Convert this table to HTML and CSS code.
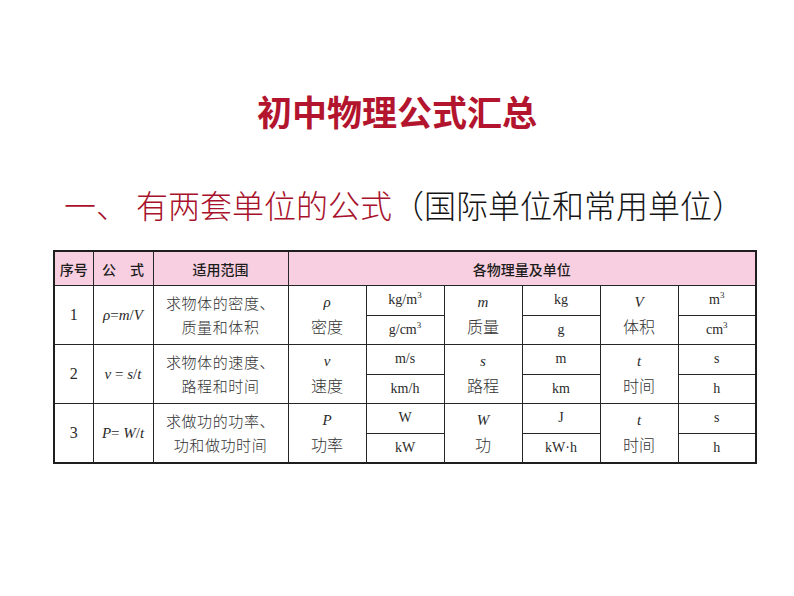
FILE: index.html
```html
<!DOCTYPE html>
<html lang="zh">
<head>
<meta charset="utf-8">
<title>初中物理公式汇总</title>
<link rel="stylesheet" href="styles.css">
</head>
<body>
<div class="page">
  <h1 class="title">初中物理公式汇总</h1>
  <h2 class="subtitle"><span class="red">一、</span><span class="red gap">有两套单位的公式</span><span class="black">（国际单位和常用单位）</span></h2>
  <table class="formulas">
    <colgroup>
      <col class="c1"><col class="c2"><col class="c3">
      <col class="cq"><col class="cq"><col class="cq"><col class="cq"><col class="cq"><col class="cq">
    </colgroup>
    <thead>
      <tr class="head">
        <th>序号</th>
        <th>公&emsp;式</th>
        <th>适用范围</th>
        <th colspan="6">各物理量及单位</th>
      </tr>
    </thead>
    <tbody>
      <tr class="r-a">
        <td rowspan="2" class="num">1</td>
        <td rowspan="2" class="fm"><i>ρ</i>=<i>m</i>/<i>V</i></td>
        <td rowspan="2" class="scope">求物体的密度、<br>质量和体积</td>
        <td rowspan="2" class="qty"><i>ρ</i><br><span class="cn">密度</span></td>
        <td class="unit">kg/m<sup>3</sup></td>
        <td rowspan="2" class="qty"><i>m</i><br><span class="cn">质量</span></td>
        <td class="unit">kg</td>
        <td rowspan="2" class="qty"><i>V</i><br><span class="cn">体积</span></td>
        <td class="unit">m<sup>3</sup></td>
      </tr>
      <tr class="r-b">
        <td class="unit">g/cm<sup>3</sup></td>
        <td class="unit">g</td>
        <td class="unit">cm<sup>3</sup></td>
      </tr>
      <tr class="r-a r2">
        <td rowspan="2" class="num">2</td>
        <td rowspan="2" class="fm"><i>v</i> = <i>s</i>/<i>t</i></td>
        <td rowspan="2" class="scope">求物体的速度、<br>路程和时间</td>
        <td rowspan="2" class="qty"><i>v</i><br><span class="cn">速度</span></td>
        <td class="unit">m/s</td>
        <td rowspan="2" class="qty"><i>s</i><br><span class="cn">路程</span></td>
        <td class="unit">m</td>
        <td rowspan="2" class="qty"><i>t</i><br><span class="cn">时间</span></td>
        <td class="unit">s</td>
      </tr>
      <tr class="r-b">
        <td class="unit">km/h</td>
        <td class="unit">km</td>
        <td class="unit">h</td>
      </tr>
      <tr class="r-a">
        <td rowspan="2" class="num">3</td>
        <td rowspan="2" class="fm"><i>P</i>= <i>W</i>/<i>t</i></td>
        <td rowspan="2" class="scope">求做功的功率、<br>功和做功时间</td>
        <td rowspan="2" class="qty"><i>P</i><br><span class="cn">功率</span></td>
        <td class="unit">W</td>
        <td rowspan="2" class="qty"><i>W</i><br><span class="cn">功</span></td>
        <td class="unit">J</td>
        <td rowspan="2" class="qty"><i>t</i><br><span class="cn">时间</span></td>
        <td class="unit">s</td>
      </tr>
      <tr class="r-b">
        <td class="unit">kW</td>
        <td class="unit">kW·h</td>
        <td class="unit">h</td>
      </tr>
    </tbody>
  </table>
</div>
</body>
</html>
```

FILE: styles.css
```css
html, body {
  margin: 0;
  padding: 0;
  background: #ffffff;
}

.page {
  width: 794px;
  height: 596px;
  display: flex;
  flex-direction: column;
  font-family: "Noto Sans CJK SC", "Noto Sans", sans-serif;
}

.title {
  margin: 93px 0 0 0;
  font-size: 35px;
  line-height: 36px;
  font-weight: 700;
  color: #b3142e;
  text-align: center;
  letter-spacing: 0;
}

.subtitle {
  margin: 58px 0 0 64px;
  font-size: 32px;
  line-height: 34px;
  font-weight: 300;
  white-space: nowrap;
}

.red { color: #a8112b; }
.black { color: #151515; }
.gap { margin-left: 8px; }

.formulas {
  margin: 29px 0 0 53px;
  border-collapse: collapse;
  table-layout: fixed;
  width: 702px;
  border: 2px solid #1e1e1e;
  font-family: "Liberation Serif", "Noto Sans CJK SC", serif;
  color: #2a2a2a;
}

.c1 { width: 39px; }
.c2 { width: 60px; }
.c3 { width: 135px; }
.cq { width: 78px; }

.formulas th,
.formulas td {
  border: 1.5px solid #262626;
  padding: 0;
  text-align: center;
  vertical-align: middle;
}

.head th {
  height: 33px;
  background: #f8cfe0;
  font-family: "Noto Sans CJK SC", sans-serif;
  font-size: 14px;
  font-weight: 500;
  color: #1c1c1c;
}

.r-a td.unit,
.r-b td.unit {
  height: 28.5px;
  font-size: 14px;
}

.num {
  font-size: 16px;
}

.fm {
  font-size: 15px;
}

.scope {
  font-family: "Noto Sans CJK SC", sans-serif;
  font-weight: 300;
  font-size: 15px;
  letter-spacing: 0.6px;
  line-height: 24px;
  color: #333333;
}

.qty {
  font-size: 15px;
  line-height: 24px;
}

.qty .cn {
  font-family: "Noto Sans CJK SC", sans-serif;
  font-weight: 300;
  font-size: 16px;
  color: #333333;
}

sup {
  font-size: 9px;
  line-height: 0;
  vertical-align: 6px;
}
```
